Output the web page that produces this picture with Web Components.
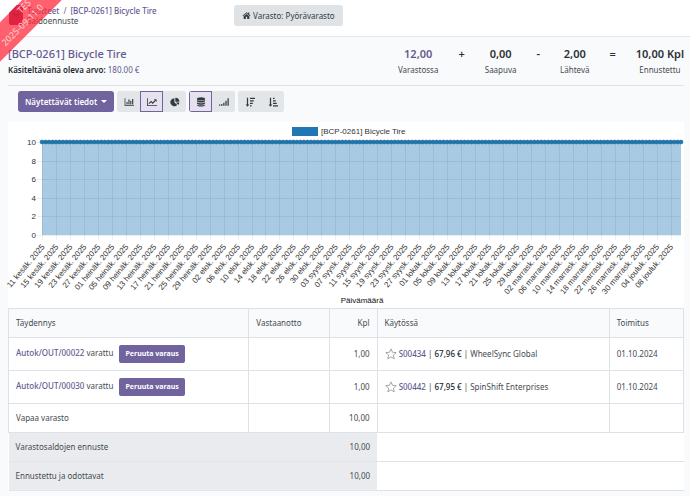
<!DOCTYPE html>
<html lang="fi">
<head>
<meta charset="utf-8">
<title>Saldoennuste</title>
<style>
body{margin:0;min-height:100vh;background:#f8fafb;color:#454b52;font:8px/12px "Noto Sans","Open Sans",sans-serif;overflow-x:hidden;
--link:#66598f;--primary:#71639e;--line:#dee2e6;--muted:#e2e6e9}
</style>
</head>
<body>
<forecast-page></forecast-page>
<script>
class Base extends HTMLElement{
  connectedCallback(){
    if(this.shadowRoot)return;
    this.attachShadow({mode:'open'}).innerHTML=this.view();
  }
}

const ICONS={
  home:'<path d="M8 2 .8 8.3l1 1.1L8 4l6.2 5.4 1-1.1L13 6.3V2.6h-2v2z"/><path d="M8 5.2 3 9.5V14h3.8v-4h2.4v4H13V9.500z"/>',
  bar:'<path d="M1 2h1.200v11H16v1.200H1z"/><path d="M4 8h1.800v4H4zM7 4h1.800v8H7zM10 6h1.800v6H10zM13 3h1.800v9H13z"/>',
  line:'<path d="M0 2h1.300v11H16v1.300H0z"/><path d="M2.500 10 6.500 6l2.500 2.500L12.500 5 11 3.500h4.300v4.300L13.800 6.300 9 11 6.500 8.500l-2.800 2.700z"/>',
  pie:'<path d="M7 2v6.400l4.500 4.500A6.400 6.400 0 1 1 7 2z"/><path d="M8.500 1A6.500 6.500 0 0 1 15 7.400H8.500z"/><path d="M9.300 8.600H15a6.400 6.400 0 0 1-1.800 4z"/>',
  database:'<ellipse cx="8" cy="3" rx="6.500" ry="2.500"/><path d="M1.500 4.800c3 2 10 2 13 0v2c-1.500 2.600-11.500 2.600-13 0z"/><path d="M1.500 8.300c3 2 10 2 13 0v2c-1.500 2.600-11.500 2.600-13 0z"/><path d="M1.500 11.800c3 2 10 2 13 0v1.400c-1.500 2.600-11.500 2.600-13 0z"/>',
  signal:'<path d="M0 12h2v2H0zM3.400 11h2v3h-2zM6.800 9h2v5h-2zM10.200 6h2v8h-2zM13.600 2h2v12h-2z"/>',
  desc:'<path d="M3 1h2v11h2l-3 3.500L1 12h2z"/><path d="M8 1h8v2H8zM8 5h6v2H8zM8 9h4.500v2H8zM8 13h2.500v2H8z"/>',
  asc:'<path d="M3 1h2v11h2l-3 3.500L1 12h2z"/><path d="M8 1h2.500v2H8zM8 5h4.500v2H8zM8 9h6v2H8zM8 13h8v2H8z"/>',
  star:'<path d="m8 1.200 2 4.500 4.900.5-3.700 3.300 1.100 4.900L8 11.900l-4.300 2.500 1.100-4.900L1.100 6.200 6 5.700z" fill="none" stroke="currentColor"/>'
};
customElements.define('fa-icon',class extends Base{view(){return `
<style>:host{display:inline-block;width:var(--size,10px);height:var(--size,10px);vertical-align:middle}svg{display:block;width:100%;height:100%;fill:currentColor}</style>
<svg viewBox="0 0 16 16" aria-hidden="true">${ICONS[this.getAttribute('name')]}</svg>`}});

customElements.define('env-ribbon',class extends Base{view(){return `
<style>
:host{position:absolute;left:0;top:0;width:64px;height:64px;overflow:hidden;pointer-events:none}
div{position:absolute;left:-39px;top:7px;width:120px;height:28px;box-sizing:border-box;padding-left:31px;transform:rotate(-45deg);background:rgba(255,40,60,.74);color:#ffd3d6;font-size:9px;line-height:12px;white-space:nowrap}
span{display:block}.a{padding-left:34px}
</style><div><span class="a">TES</span><span>2025-09-11 0</span></div>`}});

customElements.define('page-header',class extends Base{view(){return `
<style>
:host{display:grid;grid-template-columns:1fr 2fr;align-items:start;background:#fff;border-bottom:1px solid #e4e7ea;padding:5px 6px 10px 9px}
.left{display:flex;gap:4px}
.logo{width:14px;height:20px;flex:none}
nav{line-height:10px;white-space:nowrap;padding-top:1px}
ol{list-style:none;margin:0;padding:0;display:flex;font-weight:500}
li+li::before{content:"/";margin:0 4px;color:#7b8087}
a{color:var(--link);text-decoration:none}
button{justify-self:start;height:21px;padding:0 8px;border:0;border-radius:3px;background:#dfe3e6;color:#343a40;font:inherit;display:flex;align-items:center;gap:2px;--size:9px}
</style>
<div class="left"><svg class="logo" viewBox="0 0 14 20"><path d="M8 0h4q2 0 2 2v16q0 2-2 2H2q-2 0-2-2V8z" fill="#8d1552"/><path d="m4 8 3 3 3-3" fill="none" stroke="#4d0d33" stroke-width="2"/></svg>
<nav aria-label="Murupolku"><ol><li><a href="#">Tuotteet</a></li><li><a href="#">[BCP-0261] Bicycle Tire</a></li></ol><div>Saldoennuste</div></nav></div>
<button type="button"><fa-icon name="home"></fa-icon>Varasto: Pyörävarasto</button>`}});

customElements.define('stock-stat',class extends Base{view(){return `
<style>:host{display:block;text-align:center;white-space:nowrap}
b{display:block;font-size:11px;line-height:16px;font-weight:600;color:#2b3036}
:host([linked]) b{color:var(--link)}
span{display:block;line-height:16px}</style><b><slot name="value"></slot></b><span><slot></slot></span>`}});

customElements.define('product-summary',class extends Base{view(){return `
<style>
:host{display:flex;justify-content:space-between;margin:0 6px 0 8px;padding:9px 0 7px;border-bottom:1px solid #e0e4e7}
h1{margin:0;font-size:11px;line-height:16px;font-weight:600}
h1 a{color:var(--link);text-decoration:none;font-weight:500}
p{margin:0;line-height:16px}p b{font-weight:600;color:#22272c}p span{color:var(--link)}
.stats{display:flex;gap:20px}
</style>
<div><h1><a href="#">[BCP-0261] Bicycle Tire</a></h1><p><b>Käsiteltävänä oleva arvo:</b> <span>180.00 €</span></p></div>
<div class="stats">
<stock-stat linked><span slot="value">12,00</span>Varastossa</stock-stat>
<stock-stat><span slot="value">+</span></stock-stat>
<stock-stat><span slot="value">0,00</span>Saapuva</stock-stat>
<stock-stat><span slot="value">-</span></stock-stat>
<stock-stat><span slot="value">2,00</span>Lähtevä</stock-stat>
<stock-stat><span slot="value">=</span></stock-stat>
<stock-stat><span slot="value">10,00 Kpl</span>Ennustettu</stock-stat>
</div>`}});

customElements.define('button-group',class extends Base{view(){return `
<style>:host{display:flex;border-radius:3px;overflow:hidden}</style><slot></slot>`}});
customElements.define('tool-button',class extends Base{view(){const on=this.hasAttribute('active');return `
<style>:host{display:block}button{display:grid;place-items:center;width:23px;height:21px;padding:0;border:1px solid var(--muted);background:var(--muted);color:#343a40}
:host([active]) button{border-color:var(--primary);background:#e5e1ee}</style>
<button type="button" aria-pressed="${on}" aria-label="${this.getAttribute('label')}"><fa-icon name="${this.getAttribute('icon')}"></fa-icon></button>`}});

customElements.define('chart-toolbar',class extends Base{view(){return `
<style>:host{display:flex;gap:3px;padding:5px 18px 10px}
.menu{display:flex;align-items:center;gap:4px;height:21px;padding:0 7px;border:0;border-radius:3px;background:var(--primary);color:#fff;font:inherit;font-weight:600}
.menu::after{content:"";border:3px solid transparent;border-top-color:#fff;border-bottom:0}</style>
<button class="menu" type="button" aria-haspopup="true">Näytettävät tiedot</button>
<button-group><tool-button icon="bar" label="Pylväskaavio"></tool-button><tool-button icon="line" label="Viivakaavio" active></tool-button><tool-button icon="pie" label="Piirakkakaavio"></tool-button></button-group>
<button-group><tool-button icon="database" label="Pinottu" active></tool-button><tool-button icon="signal" label="Kumulatiivinen"></tool-button></button-group>
<button-group><tool-button icon="desc" label="Laskeva"></tool-button><tool-button icon="asc" label="Nouseva"></tool-button></button-group>`}});

customElements.define('forecast-chart',class extends Base{view(){
  const L=34,R=673,T=20,B=113,days=183,step=(R-L)/days;
  const months=['tammik','helmik','maalisk','huhtik','toukok','kesäk','heinäk','elok','syysk','lokak','marrask','jouluk'];
  let grid='',labels='',dots='';
  for(let v=0;v<=10;v+=2){
    const y=B-(B-T)*v/10;
    grid+=`<path d="M${L-5} ${Math.round(y)+.5}H${R}"/>`;
    labels+=`<text x="28" y="${y+3}" text-anchor="end">${v}</text>`;
  }
  for(let d=0;d<=days;d++){
    const x=L+d*step;
    dots+=`<circle cx="${x}" cy="${T}" r="2"/>`;
    if(d%4===0&&d<=180){
      const t=new Date(Date.UTC(2025,5,11+d));
      grid+=`<path d="M${Math.round(x)+.5} ${T}V${B+5}"/>`;
      labels+=`<text transform="translate(${x+3} ${B+12}) rotate(-50)" text-anchor="end">${String(t.getUTCDate()).padStart(2,'0')} ${months[t.getUTCMonth()]}. 2025</text>`;
    }
  }
  return `
<style>:host{display:block;margin:0 6px 0 8px;background:#fff}svg{display:block;width:100%;height:auto;overflow:visible;font:8px "Liberation Sans",Arial,sans-serif;fill:#333}</style>
<svg viewBox="0 0 676 186" role="img" aria-label="Saldoennuste">
<rect x="284" y="5" width="26" height="9" fill="#1f77b4"/><text x="313" y="12">[BCP-0261] Bicycle Tire</text>
<rect x="${L}" y="${T}" width="${R-L}" height="${B-T}" fill="#a8cae2"/>
<g stroke="#003050" stroke-opacity=".08">${grid}</g>
<path d="M${L} ${T}H${R}" stroke="#1f77b4" stroke-width="2"/>
<g fill="#1f77b4" stroke="#17608f" stroke-width=".5">${dots}</g>
${labels}<text x="354" y="181" text-anchor="middle" fill="#111">Päivämäärä</text></svg>`}});

customElements.define('forecast-table',class extends Base{view(){
  const move=(n,so,price,who)=>`<tr class="move"><td><a href="#">Autok/OUT/${n}</a> varattu <button class="act" type="button">Peruuta varaus</button></td><td></td><td class="n">1,00</td><td><button class="star" type="button" aria-label="Prioriteetti"><fa-icon name="star"></fa-icon></button> <a href="#">${so}</a> | <b>${price} €</b> | ${who}</td><td>01.10.2024</td></tr>`;
  return `
<style>
:host{display:block;margin:0 6px 0 8px}
table{width:100%;border-collapse:collapse;table-layout:fixed;background:#fff}
th,td{box-sizing:border-box;height:29px;padding:0 7px;border:1px solid var(--line);text-align:left;font-weight:400;white-space:nowrap}
th{background:#f8fafb}
.move td{height:33px}
.n{text-align:right}
a{color:var(--link);text-decoration:none;font-weight:500}
b{font-weight:500;color:#22272c}
button{border:0;font:inherit;vertical-align:middle}
.act{height:18px;margin-left:4px;padding:0 6px;border-radius:2px;background:var(--primary);color:#fff;font-size:7px;font-weight:700}
.star{padding:0;background:none;color:#858b92;height:12px;--size:12px}
.star fa-icon{display:block}
.sum td{border-left:0;border-right:0}
.sum .g{background:#e9ebee;border-color:#e1e4e8}
</style>
<table><colgroup><col style="width:35.6%"><col style="width:12%"><col style="width:7%"><col style="width:34.4%"><col style="width:11%"></colgroup>
<thead><tr><th>Täydennys</th><th>Vastaanotto</th><th class="n">Kpl</th><th>Käytössä</th><th>Toimitus</th></tr></thead>
<tbody>${move('00022','S00434','67,96','WheelSync Global')}${move('00030','S00442','67,95','SpinShift Enterprises')}
<tr><td>Vapaa varasto</td><td></td><td class="n">10,00</td><td></td><td></td></tr>
<tr class="sum"><td class="g" colspan="2">Varastosaldojen ennuste</td><td class="g n">10,00</td><td colspan="2"></td></tr>
<tr class="sum"><td class="g" colspan="2">Ennustettu ja odottavat</td><td class="g n">10,00</td><td colspan="2"></td></tr></tbody></table>`}});

customElements.define('forecast-page',class extends Base{view(){return `
<style>:host{display:block;position:relative}</style>
<page-header></page-header><product-summary></product-summary><chart-toolbar></chart-toolbar><forecast-chart></forecast-chart><forecast-table></forecast-table><env-ribbon></env-ribbon>`}});
</script>
</body>
</html>
